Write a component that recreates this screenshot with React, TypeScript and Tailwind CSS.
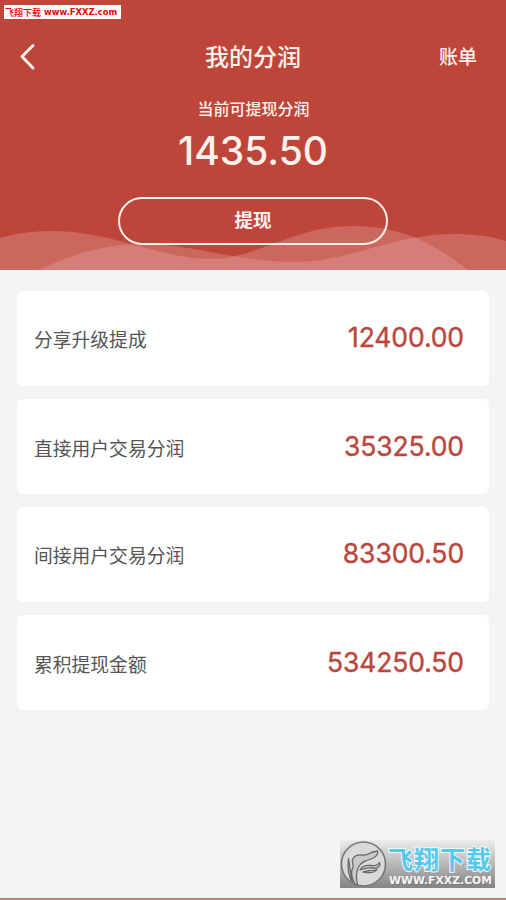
const ITEMS = [
  { label: "分享升级提成", amount: "12400.00", offset: "" },
  { label: "直接用户交易分润", amount: "35325.00", offset: "pt-[2px]" },
  { label: "间接用户交易分润", amount: "83300.50", offset: "" },
  { label: "累积提现金额", amount: "534250.50", offset: "pt-[2px]" },
];

function BackIcon() {
  return (
    <svg width="20" height="30" viewBox="0 0 20 30" fill="none">
      <path d="M15 4.500 4 15.500 15 27" stroke="#fdf1ec" strokeWidth="3" strokeLinecap="round" strokeLinejoin="round" />
    </svg>
  );
}

function Waves() {
  return (
    <svg className="absolute bottom-0 left-0" width="506" height="50" viewBox="0 220 506 50">
      <path
        d="M0 238C17 233 34 231 52 231C112 231 160 259 210 259C258 259 292 226 353 226C400 226 432 242 468 270H0Z"
        fill="#e9a9a8"
        fillOpacity="0.34"
      />
      <path
        d="M39 270C76 252 108 244 142 244C196 244 236 262 293 262C350 262 393 234 455 234C473 234 490 236 506 241V270Z"
        fill="#e9a9a8"
        fillOpacity="0.34"
      />
    </svg>
  );
}

function SiteLogo() {
  return (
    <div className="absolute left-[340px] top-[840px] flex h-12 w-[155px] bg-linear-to-b from-[#ededed] to-[#858585]">
      <svg className="shrink-0" width="48" height="48" viewBox="0 0 48 48">
        <circle cx="23.5" cy="24" r="22" fill="#dadada" stroke="#777" strokeWidth="1.6" />
        <g fill="#c8c8c8" stroke="#686868" strokeWidth="1.3" strokeLinejoin="round" strokeLinecap="round">
          <path d="M15 44C11 37 10.500 32 13 27C14 24 11 22 13 18.500C15 15 19 14.500 23 15C28 15.500 29 13 33 12L37.500 11C39 14 35.500 17.500 31 19C26 20.500 21 22 18.500 27C16 32 16 38 17.500 45Z" />
          <path d="M8.500 18.500C7.500 27 8 36 12.500 42C10.500 35 10 27 8.500 18.500Z" />
          <path d="M20 30C22 26 26 25 31 25.500C35 26 38 25 39.500 22.500C41 27 37 28.500 33 28C29 27.500 25 28 20 30Z" />
          <path d="M23 32C27 29.500 32 31.500 37 29.500C34 34 28 33 23 32Z" />
        </g>
      </svg>
      <div className="flex flex-col whitespace-nowrap pt-1.5">
        <span className="h-7 text-[25px] leading-[25px] font-bold tracking-[1px] text-[#57c8eb] [-webkit-text-stroke:2px_#effaff] [paint-order:stroke_fill]">
          飞翔下载
        </span>
        <span className="w-[105px] origin-left scale-x-[0.985] pl-px font-['DejaVu_Sans',sans-serif] text-[11px] leading-[14px] font-bold text-[#f6f6f6] [text-shadow:1px_1px_0_#777]">
          WWW.FXXZ.COM
        </span>
      </div>
    </div>
  );
}

export default function App() {
  return (
    <main className="relative flex h-[900px] w-[506px] flex-col overflow-hidden border-b-2 border-[#bd7f7b] bg-[#f4f4f4] font-['Noto_Sans_CJK_SC',sans-serif]">
      <header className="relative h-[270px] shrink-0 bg-[#be4539] text-[#fdf1ec]">
        <Waves />
        <div className="relative flex flex-col items-center pt-10">
          <nav className="grid h-8 w-full grid-cols-3 items-center pl-[18px] pr-[29px]">
            <button type="button" aria-label="返回">
              <BackIcon />
            </button>
            <h1 className="pl-[11px] text-center text-2xl font-medium leading-8">我的分润</h1>
            <button type="button" className="text-right text-[19px] font-medium leading-8">
              账单
            </button>
          </nav>
          <p className="mt-6 pl-px text-base font-medium leading-6">当前可提现分润</p>
          <p className="mt-1 font-['Inter',sans-serif] text-[39px] leading-[54px] font-medium">1435.50</p>
          <button
            type="button"
            className="mt-[19px] h-12 w-[270px] rounded-full border-2 border-[#fdf1ec] pb-1 text-[18.500px] font-bold leading-none"
          >
            提现
          </button>
        </div>
      </header>

      <section className="flex flex-col gap-[13px] px-[17px] pt-[21px]">
        {ITEMS.map(({ label, amount, offset }) => (
          <div
            key={label}
            className={`flex h-[95px] items-center justify-between rounded-md bg-white pl-[17px] pr-[25px] ${offset}`}
          >
            <span className="pt-0.5 text-[18.800px] text-[#555]">{label}</span>
            <span className="pb-1 font-['Inter',sans-serif] text-[26.500px] leading-9 tracking-[-0.1px] text-[#b9473e] [-webkit-text-stroke:0.4px_#b9473e]">
              {amount}
            </span>
          </div>
        ))}
      </section>

      <div className="absolute left-1 top-[5px] flex h-3.5 w-[117px] items-center gap-[3px] whitespace-nowrap bg-white pl-px text-[9px] leading-none font-medium text-[#f00000]">
        <span>飞翔下载</span>
        <span className="origin-left scale-x-[0.93] font-['DejaVu_Sans',sans-serif] font-bold">www.FXXZ.com</span>
      </div>
      <SiteLogo />
    </main>
  );
}
